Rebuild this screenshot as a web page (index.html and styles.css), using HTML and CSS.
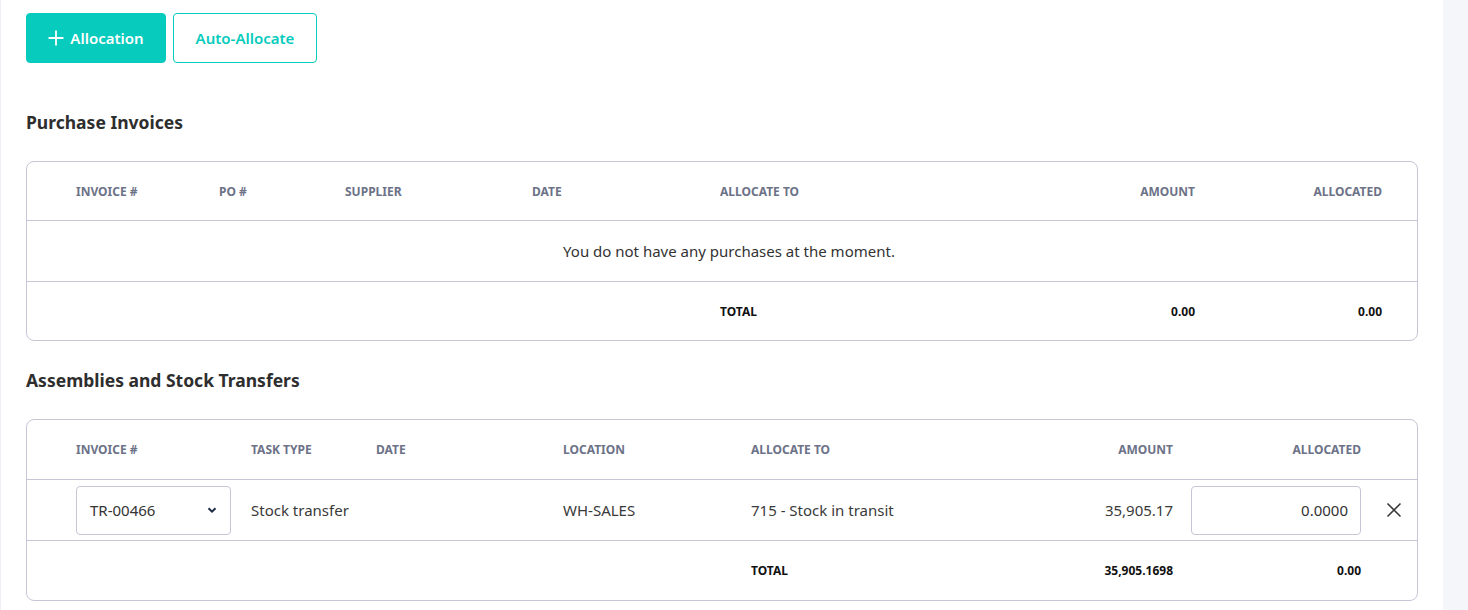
FILE: index.html
```html
<!DOCTYPE html>
<html lang="en">
<head>
    <meta charset="UTF-8">
    <meta name="viewport" content="width=device-width, initial-scale=1.0">
    <title>Allocations</title>
    <link rel="stylesheet" href="styles.css">
</head>
<body>
    <div class="layout">
        <main class="content">
            <div class="actions">
                <button class="btn btn-primary">
                    <svg class="btn-icon" viewBox="0 0 16 16" width="16" height="16"><path d="M8 0.5v15M0.5 8h15" stroke="currentColor" stroke-width="1.8" fill="none"/></svg>
                    Allocation
                </button>
                <button class="btn btn-outline">Auto-Allocate</button>
            </div>

            <h2 class="section-title first">Purchase Invoices</h2>
            <div class="table-card">
                <table class="alloc-table purchases">
                    <colgroup>
                        <col style="width:49px"><col style="width:143px"><col style="width:126px"><col style="width:187px"><col style="width:188px"><col><col style="width:186px"><col style="width:187px"><col style="width:35px">
                    </colgroup>
                    <thead>
                        <tr>
                            <th></th>
                            <th>Invoice #</th>
                            <th>PO #</th>
                            <th>Supplier</th>
                            <th>Date</th>
                            <th>Allocate To</th>
                            <th class="num">Amount</th>
                            <th class="num">Allocated</th>
                            <th></th>
                        </tr>
                    </thead>
                    <tbody>
                        <tr class="empty-row">
                            <td></td>
                            <td colspan="7" class="empty">You do not have any purchases at the moment.</td>
                            <td></td>
                        </tr>
                    </tbody>
                    <tfoot>
                        <tr>
                            <td colspan="5"></td>
                            <td>TOTAL</td>
                            <td class="num">0.00</td>
                            <td class="num">0.00</td>
                            <td></td>
                        </tr>
                    </tfoot>
                </table>
            </div>

            <h2 class="section-title">Assemblies and Stock Transfers</h2>
            <div class="table-card">
                <table class="alloc-table transfers">
                    <colgroup>
                        <col style="width:49px"><col style="width:175px"><col style="width:125px"><col style="width:187px"><col style="width:188px"><col><col style="width:170px"><col style="width:188px"><col style="width:56px">
                    </colgroup>
                    <thead>
                        <tr>
                            <th></th>
                            <th>Invoice #</th>
                            <th>Task Type</th>
                            <th>Date</th>
                            <th>Location</th>
                            <th>Allocate To</th>
                            <th class="num">Amount</th>
                            <th class="num">Allocated</th>
                            <th></th>
                        </tr>
                    </thead>
                    <tbody>
                        <tr class="item-row">
                            <td></td>
                            <td>
                                <div class="select">
                                    <span>TR-00466</span>
                                    <svg class="chevron" viewBox="0 0 10 6" width="10" height="6"><path d="M1.5 1.2 5 4.6l3.5-3.4" stroke="currentColor" stroke-width="2" fill="none"/></svg>
                                </div>
                            </td>
                            <td>Stock transfer</td>
                            <td></td>
                            <td>WH-SALES</td>
                            <td>715 - Stock in transit</td>
                            <td class="num">35,905.17</td>
                            <td class="num"><input class="amount-input" type="text" value="0.0000"></td>
                            <td class="remove">
                                <svg viewBox="0 0 16 16" width="16" height="16"><path d="M1.5 1.5l13 13M14.5 1.5l-13 13" stroke="currentColor" stroke-width="1.6" fill="none"/></svg>
                            </td>
                        </tr>
                    </tbody>
                    <tfoot>
                        <tr>
                            <td colspan="5"></td>
                            <td>TOTAL</td>
                            <td class="num">35,905.1698</td>
                            <td class="num">0.00</td>
                            <td></td>
                        </tr>
                    </tfoot>
                </table>
            </div>
        </main>
        <aside class="side"></aside>
    </div>
</body>
</html>
```

FILE: styles.css
```css
body {
    margin: 0;
    font-family: 'Noto Sans', 'Liberation Sans', sans-serif;
    color: #333;
    background: #fff;
}
.layout {
    display: flex;
    min-height: 610px;
}
.content {
    box-sizing: border-box;
    width: 1443px;
    flex-shrink: 0;
    border-left: 1px solid #eef0f6;
    padding: 13px 25px 0 25px;
}
.side {
    flex: 1;
    background-color: #f5f6fa;
}
.actions {
    display: flex;
    gap: 7px;
}
.btn {
    height: 50px;
    border-radius: 4px;
    font-family: inherit;
    font-size: 15px;
    font-weight: 600;
    cursor: pointer;
    display: flex;
    align-items: center;
    justify-content: center;
}
.btn-primary {
    width: 140px;
    background-color: #06cbbd;
    border: 1px solid #06cbbd;
    color: #fff;
    gap: 6px;
}
.btn-icon {
    margin-top: -1px;
}
.btn-outline {
    width: 144px;
    background: #fff;
    border: 1px solid #06cbbd;
    color: #06cbbd;
}
.section-title {
    font-size: 17.5px;
    font-weight: 700;
    line-height: 24px;
    color: #2e2e2e;
    margin: 27px 0 27px;
}
.section-title.first {
    margin-top: 47px;
}
.table-card {
    border: 1px solid #c6c6d6;
    border-radius: 8px;
    overflow: hidden;
}
.alloc-table {
    width: 100%;
    border-collapse: collapse;
    table-layout: fixed;
}
.alloc-table th,
.alloc-table td {
    padding: 0;
    text-align: left;
    white-space: nowrap;
}
.alloc-table th {
    height: 58px;
    font-size: 12px;
    font-weight: 700;
    text-transform: uppercase;
    color: #6c7287;
    border-bottom: 1px solid #c6c6d6;
}
.alloc-table .num {
    text-align: right;
}
.empty-row td {
    height: 60px;
    font-size: 15px;
    color: #333;
    border-bottom: 1px solid #c6c6d6;
}
.alloc-table .empty {
    text-align: center;
}
.alloc-table tfoot td {
    height: 58px;
    font-size: 12px;
    font-weight: 700;
    color: #111;
}
.transfers th {
    height: 59px;
}
.transfers tfoot td {
    height: 59px;
}
.item-row td {
    height: 60px;
    font-size: 15px;
    color: #3a3a3a;
    border-bottom: 1px solid #c6c6d6;
}
.select {
    width: 155px;
    height: 49px;
    box-sizing: border-box;
    border: 1px solid #c6c6d6;
    border-radius: 4px;
    display: flex;
    align-items: center;
    justify-content: space-between;
    padding: 0 13px 0 13px;
    font-size: 15px;
    color: #333;
}
.chevron {
    color: #1f2a44;
}
.amount-input {
    width: 170px;
    height: 49px;
    box-sizing: border-box;
    border: 1px solid #c6c6d6;
    border-radius: 4px;
    padding: 0 12px;
    text-align: right;
    font-family: inherit;
    font-size: 15px;
    color: #333;
    vertical-align: middle;
}
.remove {
    color: #333;
}
.remove svg {
    display: block;
    margin-left: 25px;
}
```
